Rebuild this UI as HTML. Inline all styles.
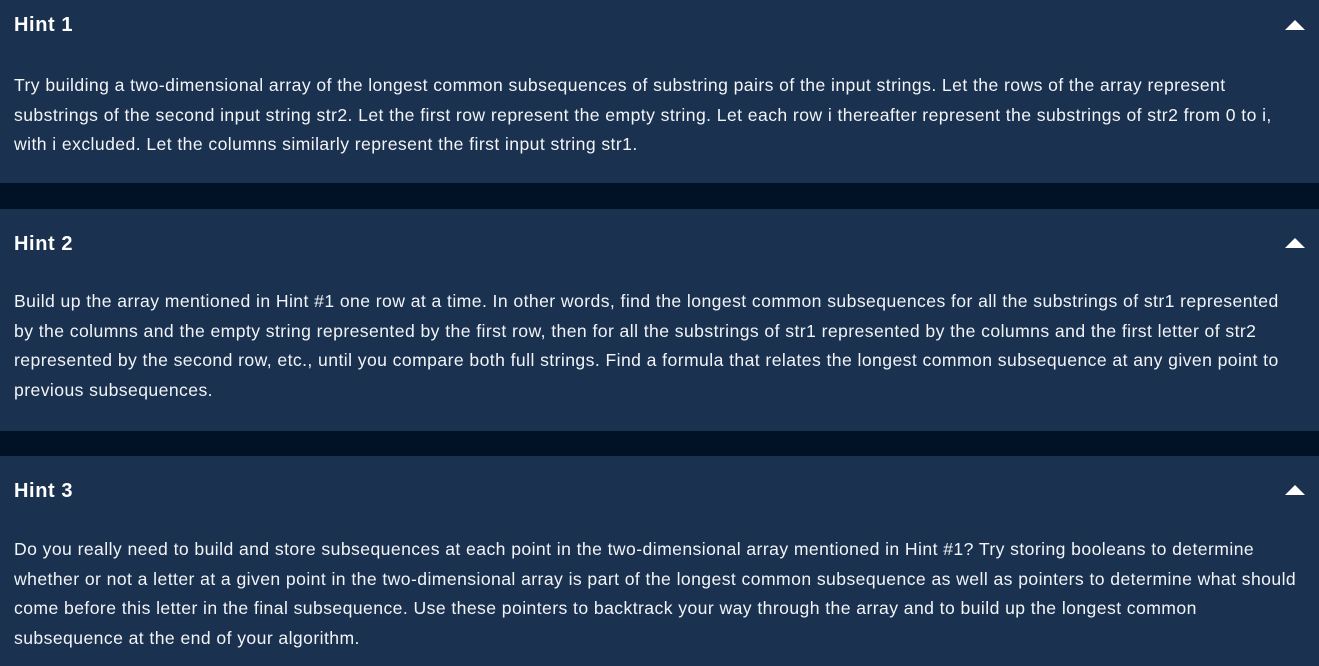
<!DOCTYPE html>
<html><head><style>
html,body{margin:0;padding:0;background:#011227;width:1319px;height:657px;overflow:hidden;font-family:"Liberation Sans",sans-serif;color:#fff}
.p{position:absolute;left:0;width:1319px;background:#1a3150}
.h{position:absolute;left:14px;top:20px;font-weight:bold;font-size:20px;letter-spacing:0.6px;line-height:30px}
.t{position:absolute;right:14px;top:29px;width:0;height:0;border-left:10px solid transparent;border-right:10px solid transparent;border-bottom:10px solid #fff}
.b{position:absolute;left:14px;top:78px;font-size:17.6px;line-height:29.5px;white-space:nowrap;letter-spacing:0.42px;color:#f2f4f7}
</style></head><body>
<div class="p" style="top:-7px;height:190px">
<div class="h" style="top:17px">Hint 1</div><div class="t" style="top:27px"></div>
<div class="b">Try building a two-dimensional array of the longest common subsequences of substring pairs of the input strings. Let the rows of the array represent<br>substrings of the second input string str2. Let the first row represent the empty string. Let each row i thereafter represent the substrings of str2 from 0 to i,<br>with i excluded. Let the columns similarly represent the first input string str1.</div>
</div>
<div class="p" style="top:209px;height:222px">
<div class="h">Hint 2</div><div class="t"></div>
<div class="b">Build up the array mentioned in Hint #1 one row at a time. In other words, find the longest common subsequences for all the substrings of str1 represented<br>by the columns and the empty string represented by the first row, then for all the substrings of str1 represented by the columns and the first letter of str2<br>represented by the second row, etc., until you compare both full strings. Find a formula that relates the longest common subsequence at any given point to<br>previous subsequences.</div>
</div>
<div class="p" style="top:456px;height:210px">
<div class="h">Hint 3</div><div class="t"></div>
<div class="b" style="top:79px">Do you really need to build and store subsequences at each point in the two-dimensional array mentioned in Hint #1? Try storing booleans to determine<br>whether or not a letter at a given point in the two-dimensional array is part of the longest common subsequence as well as pointers to determine what should<br>come before this letter in the final subsequence. Use these pointers to backtrack your way through the array and to build up the longest common<br>subsequence at the end of your algorithm.</div>
</div>
</body></html>
